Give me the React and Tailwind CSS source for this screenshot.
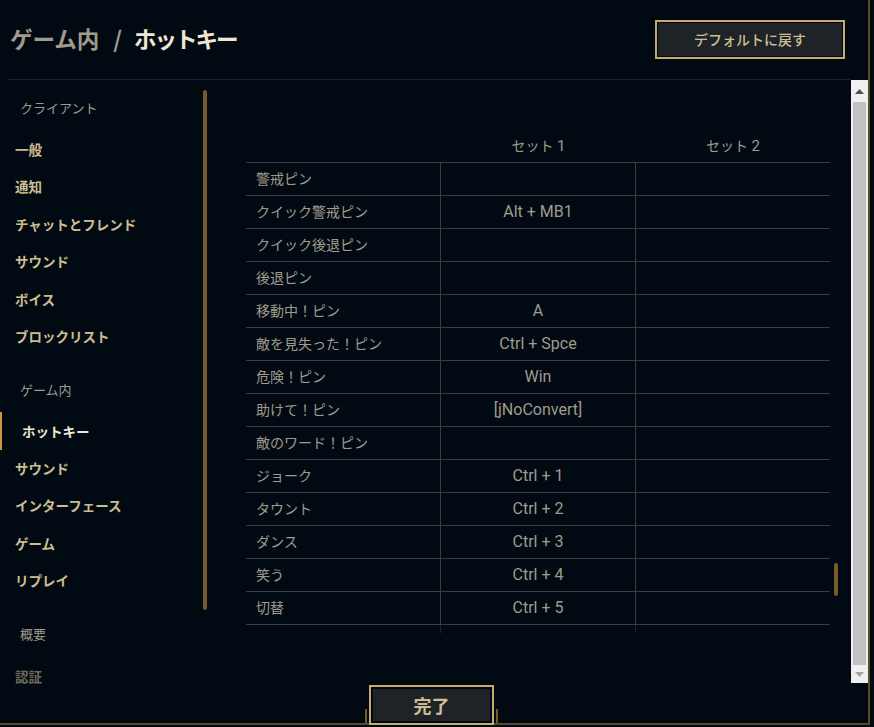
import React from 'react';

const jp = "font-['Noto_Sans_CJK_JP',sans-serif]";
const latin = "font-['Roboto','Noto_Sans_CJK_JP',sans-serif]";

const clientItems = ['一般', '通知', 'チャットとフレンド', 'サウンド', 'ボイス', 'ブロックリスト'];
const gameItems = ['サウンド', 'インターフェース', 'ゲーム', 'リプレイ'];

const hotkeys = [
  ['警戒ピン', ''],
  ['クイック警戒ピン', 'Alt + MB1'],
  ['クイック後退ピン', ''],
  ['後退ピン', ''],
  ['移動中！ピン', 'A'],
  ['敵を見失った！ピン', 'Ctrl + Spce'],
  ['危険！ピン', 'Win'],
  ['助けて！ピン', '[jNoConvert]'],
  ['敵のワード！ピン', ''],
  ['ジョーク', 'Ctrl + 1'],
  ['タウント', 'Ctrl + 2'],
  ['ダンス', 'Ctrl + 3'],
  ['笑う', 'Ctrl + 4'],
  ['切替', 'Ctrl + 5'],
];

function GroupLabel({ children, className = '' }) {
  return (
    <div className={`h-[20px] pl-[20px] flex items-center text-[13px] text-[#a09b8c] ${className}`}>
      {children}
    </div>
  );
}

function NavItem({ children }) {
  return (
    <div className="h-[37.5px] pl-[15px] flex items-center text-[13.5px] font-bold text-[#cdbe91]">
      {children}
    </div>
  );
}

function Sidebar() {
  return (
    <div className="w-[210px] flex shrink-0">
      <div className={`w-[203px] shrink-0 pt-[18px] ${jp}`}>
        <GroupLabel>クライアント</GroupLabel>
        <div className="mt-[12px]">
          {clientItems.map((item) => (
            <NavItem key={item}>{item}</NavItem>
          ))}
        </div>
        <GroupLabel className="mt-[25px]">ゲーム内</GroupLabel>
        {/* selected item */}
        <div className="mt-[12px] h-[38px] flex items-center border-l-2 border-[#c89b3c] pl-[20px] text-[13.5px] font-bold text-[#f0e6d2]">
          ホットキー
        </div>
        <div className="-mt-[1px]">
          {gameItems.map((item) => (
            <NavItem key={item}>{item}</NavItem>
          ))}
        </div>
        <GroupLabel className="mt-[25px]">概要</GroupLabel>
        <div className="mt-[20px] h-[24px] pl-[15px] flex items-center text-[13.5px] font-bold text-[#6f6959]">
          認証
        </div>
      </div>
      <div className="w-[4px] h-[520px] mt-[10px] shrink-0 rounded-sm bg-[#785a28]" />
    </div>
  );
}

function HotkeyTable() {
  return (
    <div className="relative flex-1 pl-[36px] pt-[51px]">
      <div className={`w-[584px] text-[14px] text-[#a09b8c] ${latin}`}>
        <div className="grid grid-cols-[195px_195px_194px] h-[32px] items-center border-b border-[#3c3c41]">
          <div />
          <div className="text-center">セット <span className="text-[15px]">1</span></div>
          <div className="text-center">セット <span className="text-[15px]">2</span></div>
        </div>
        {hotkeys.map(([name, key]) => (
          <div key={name} className="grid grid-cols-[195px_195px_194px] h-[33px] border-b border-[#3c3c41]">
            <div className="pl-[10px] flex items-center border-r border-[#3c3c41]">{name}</div>
            <div className="flex items-center justify-center border-r border-[#3c3c41] text-[16px]">{key}</div>
            <div />
          </div>
        ))}
        <div className="grid grid-cols-[195px_195px_194px] h-[8px]">
          <div className="border-r border-[#22252a]" />
          <div className="border-r border-[#22252a]" />
          <div />
        </div>
      </div>
      {/* inner scroll thumb */}
      <div className="absolute left-[624px] top-[483px] w-[4px] h-[33px] rounded-sm bg-[#785a28]" />
    </div>
  );
}

function Scrollbar() {
  return (
    <div className="w-[17px] h-full bg-[#f0f0f0] flex flex-col shrink-0">
      <div className="h-[22px] flex items-center justify-center">
        <svg width="9" height="5" viewBox="0 0 9 5"><path d="M4.5 0L9 5H0z" fill="#505050" /></svg>
      </div>
      <div className="flex-1 mx-[2px] bg-[#c1c1c1]" />
      <div className="h-[18px] flex items-center justify-center">
        <svg width="9" height="5" viewBox="0 0 9 5"><path d="M0 0h9L4.5 5z" fill="#a3a3a3" /></svg>
      </div>
    </div>
  );
}

export default function App() {
  return (
    <div className="w-[874px] h-[727px] bg-[#010a13] overflow-hidden">
      <div className="w-[870px] h-[725px] border-r-2 border-b-2 border-[#5c4a22] flex flex-col">
        {/* Header */}
        <div className="h-[79px] flex items-start justify-between shrink-0">
          <div className={`pl-[10px] pt-[22px] text-[22.5px] font-bold leading-[32px] ${jp}`}>
            <span className="text-[#a09b8c]">ゲーム内</span>
            <span className="text-[#a09b8c] ml-[14px] mr-[12px]">/</span>
            <span className="text-[#f0e6d2] tracking-[-2px]">ホットキー</span>
          </div>
          <button className={`mt-[20px] mr-[23px] w-[190px] h-[39px] border-2 border-[#c8aa6e] bg-[#1e2328] shadow-[inset_0_0_0_1px_#010a13] text-[14px] font-medium text-[#cdbe91] ${jp}`}>
            デフォルトに戻す
          </button>
        </div>
        <div className="ml-[8px] w-[842px] h-px bg-[#1e2328] shrink-0" />

        {/* Body */}
        <div className="h-[603px] flex shrink-0">
          <Sidebar />
          <HotkeyTable />
          <Scrollbar />
        </div>

        {/* Footer */}
        <div className="flex-1 flex items-end justify-center">
          <div className="flex items-end gap-[2px] -mb-[2px] mr-[5px] relative">
            <div className="w-[2px] h-[14px] bg-[#785a28] mb-[2px]" />
            <button className={`w-[125px] h-[40px] border-2 border-[#c8aa6e] bg-[#1e2328] shadow-[inset_0_0_0_2px_#010a13] text-[18px] font-bold text-[#cdbe91] ${jp}`}>
              完了
            </button>
            <div className="w-[2px] h-[14px] bg-[#785a28] mb-[2px]" />
          </div>
        </div>
      </div>
    </div>
  );
}
